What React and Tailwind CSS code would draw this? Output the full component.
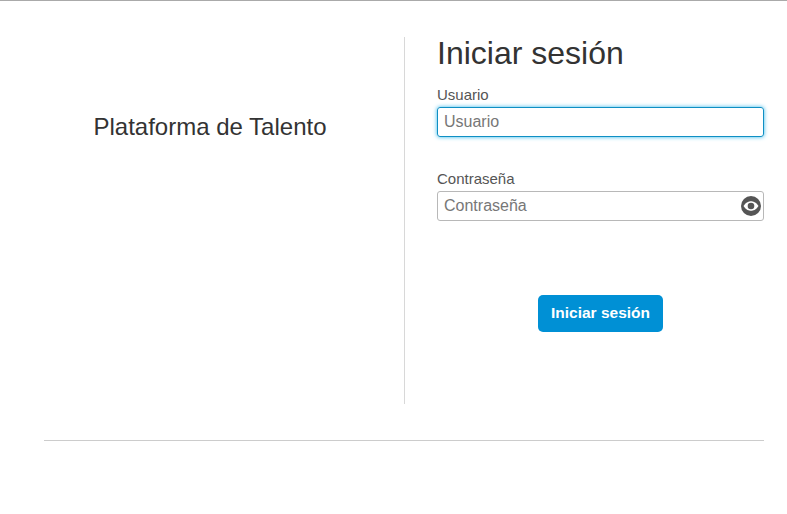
export default function App() {
  return (
    <div className="h-[514px] bg-white border-t border-[#aaaaaa] font-['Liberation_Sans',Arial,sans-serif] text-[#333333] overflow-hidden">
      <div className="mx-[23px] ml-[44px] pt-[36px]">

        {/* Main row */}
        <div className="flex h-[367px]">
          <div className="w-[361px] border-r border-[#d8d8d8] flex justify-center pt-[76px] pr-[28px]">
            <h2 className="text-[24px] leading-[28px] h-[28px] whitespace-nowrap">Plataforma de Talento</h2>
          </div>

          {/* Login form */}
          <div className="flex-1 pl-[32px]">
            <h1 className="text-[32px] leading-[32px]">Iniciar sesión</h1>

            <label className="block mt-[18px] text-[15px] leading-[16px] text-[#555555]">Usuario</label>
            <input
              className="block w-full h-[30px] mt-[4px] px-[6px] text-base rounded-[3px] border border-[#0f8fc4] shadow-[0_0_4px_#35b8ea] outline-none placeholder:text-[#777777]"
              placeholder="Usuario"
            />

            <label className="block mt-[34px] text-[15px] leading-[16px] text-[#555555]">Contraseña</label>
            <div className="relative mt-[4px]">
              <input
                className="block w-full h-[30px] px-[6px] text-base rounded-[3px] border border-[#b8b8b8] outline-none placeholder:text-[#777777]"
                placeholder="Contraseña"
              />
              <svg className="absolute right-[3px] top-[5px]" width="20" height="20" viewBox="0 0 20 20">
                <circle cx="10" cy="10" r="10" fill="#555555" />
                <path d="M2.5 10 C5 6 8 5.2 10 5.2 C12 5.2 15 6 17.5 10 C15 14 12 14.8 10 14.8 C8 14.8 5 14 2.5 10 Z" fill="#ffffff" />
                <circle cx="10" cy="10" r="3.3" fill="#555555" />
              </svg>
            </div>

            <div className="flex justify-center mt-[74px]">
              <button className="w-[125px] h-[37px] pb-[2px] bg-[#0090d5] text-white text-[15.5px] font-bold rounded-[5px]">
                Iniciar sesión
              </button>
            </div>
          </div>
        </div>

        <hr className="mt-[36px] border-t border-[#cccccc]" />
      </div>
    </div>
  );
}
